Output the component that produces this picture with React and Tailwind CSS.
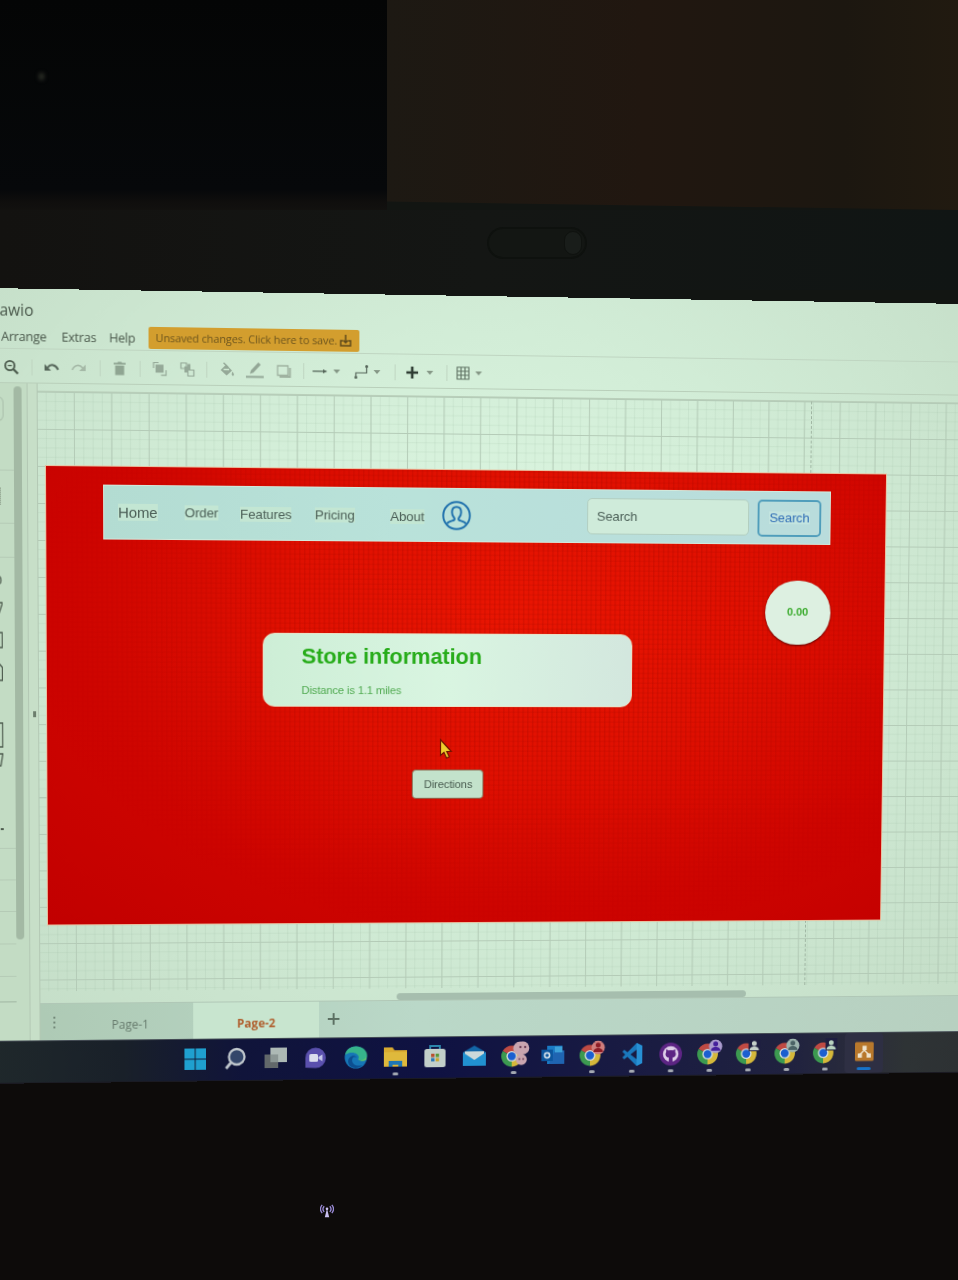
import React from "react";

// Projects a flat rectangle onto a quadrilateral: CSS matrix3d for the tilted display.
function project(src, quad) {
  const [p0, p1, p2, p3] = quad;
  const dx1 = p1[0] - p2[0], dx2 = p3[0] - p2[0], sx = p0[0] - p1[0] + p2[0] - p3[0];
  const dy1 = p1[1] - p2[1], dy2 = p3[1] - p2[1], sy = p0[1] - p1[1] + p2[1] - p3[1];
  const den = dx1 * dy2 - dx2 * dy1;
  const g = (sx * dy2 - dx2 * sy) / den;
  const h = (dx1 * sy - sx * dy1) / den;
  const a = p1[0] - p0[0] + g * p1[0], b = p3[0] - p0[0] + h * p3[0], c = p0[0];
  const d = p1[1] - p0[1] + g * p1[1], e = p3[1] - p0[1] + h * p3[1], f = p0[1];
  const { x, y, w, h: ht } = src;
  const row = (m, n, k) => [m / w, n / ht, k - (m * x) / w - (n * y) / ht];
  const X = row(a, b, c), Y = row(d, e, f), W = row(g, h, 1);
  return `matrix3d(${[X[0], Y[0], 0, W[0], X[1], Y[1], 0, W[1], 0, 0, 1, 0, X[2], Y[2], 0, W[2]].join(",")})`;
}

const tilt = project({ x: 56, y: 176, w: 864, h: 462 }, [
  [56, 176],
  [896, 184.5],
  [890, 629.5],
  [58, 634.5],
]);

const Sep = ({ className }) => <div className={`h-4 w-px shrink-0 bg-[#bfd5c1] ${className}`} />;
const Icon = ({ className, children }) => (
  <svg viewBox="0 0 16 16" className={`h-4 w-4 shrink-0 ${className}`} fill="none" stroke="currentColor" strokeWidth="1.5">
    {children}
  </svg>
);
const Caret = ({ className }) => (
  <svg viewBox="0 0 8 8" className={`h-2 w-2 shrink-0 text-[#859786] ${className}`}>
    <path d="M0.5 2h7L4 6z" fill="currentColor" />
  </svg>
);

function Toolbar() {
  return (
    <div className="flex h-[34px] items-center border-b border-[#b9cfba] pl-[14px] pt-[2px]">
      <Icon className="text-[#4b5a4c]">
        <circle cx="6.5" cy="6.5" r="4.6" strokeWidth="1.8" />
        <path d="M10 10l4.5 4.5" strokeWidth="2.2" />
        <path d="M4.5 6.5h4" strokeWidth="1.2" />
      </Icon>
      <Sep className="ml-3" />
      <Icon className="ml-[11px] text-[#56665a]">
        <path d="M4 8c3-4 8-3.500 10.500 2" strokeWidth="2" />
        <path d="M1 4.500v6.500h6.500z" fill="currentColor" stroke="none" />
      </Icon>
      <Icon className="ml-[11px] text-[#a5b9a7]">
        <path d="M12 8c-3-4-8-3.500-10.500 2" strokeWidth="1.6" />
        <path d="M15 4.500v6.500h-6.500z" fill="currentColor" stroke="none" />
      </Icon>
      <Sep className="ml-[13px]" />
      <Icon className="ml-[11px] text-[#8fa592]">
        <path d="M3.500 5h9v9.500h-9z M2 2.200h3.500l1-1h3l1 1h3.500v1.700h-12z" fill="currentColor" stroke="none" />
      </Icon>
      <Sep className="ml-3" />
      <Icon className="ml-[11px] text-[#95a998]">
        <path d="M4 3.500h8v8h-8z" fill="currentColor" stroke="none" />
        <path d="M2 7V1.500h5M9.500 14.200h5V9" strokeWidth="1.200" />
      </Icon>
      <Icon className="ml-3 text-[#95a998]">
        <path d="M1.500 1.500h5.500v5.500h-5.500zM8.500 8.500h6v6h-6z" strokeWidth="1.200" />
        <path d="M5 5h6v3h-3v3h-3z M8 2.500h3v3h-3z" fill="currentColor" stroke="none" />
      </Icon>
      <Sep className="ml-[11px]" />
      <Icon className="ml-3 text-[#95a998]">
        <path d="M7 2.500l6 6-5.500 5-6-5.500z M13.500 9.500c1.500 2 2 4 .5 4.200s-1.800-2-.5-4.200z" fill="currentColor" stroke="none" />
        <path d="M4.500 0.800l4.500 4.500" />
        <path d="M4.500 7.500h5.500" stroke="#cfe9d2" />
      </Icon>
      <svg viewBox="0 0 18 18" className="ml-[11px] h-[18px] w-[18px] shrink-0 text-[#93a796]">
        <path d="M4 12.500l1-3.500 7.500-8 2.500 2.300-7.500 8z" fill="currentColor" />
        <path d="M0 14.500h18v2h-18z" fill="currentColor" />
      </svg>
      <Icon className="ml-[12px] text-[#9fb2a0]">
        <path d="M4 14h10.500V5" strokeWidth="2" />
        <path d="M2 3h10.500v9.500h-10.500z" strokeWidth="1.300" />
      </Icon>
      <Sep className="ml-3" />
      <Icon className="ml-2 text-[#56665a]">
        <path d="M0.500 8h12" strokeWidth="1.300" />
        <path d="M11 6l4.500 2-4.500 2z" fill="currentColor" stroke="none" />
      </Icon>
      <Caret className="ml-[5px]" />
      <Icon className="ml-[13px] text-[#56665a]">
        <path d="M2.500 13.500V9h11V3" strokeWidth="1.200" />
        <circle cx="2.500" cy="13.500" r="1.500" fill="currentColor" stroke="none" />
        <circle cx="13.500" cy="2.500" r="1.500" fill="currentColor" stroke="none" />
      </Icon>
      <Caret className="ml-1" />
      <Sep className="ml-[14px]" />
      <Icon className="ml-[9px] text-[#2e3c33]">
        <path d="M8 2v12M2 8h12" strokeWidth="2.600" />
      </Icon>
      <Caret className="ml-[6px]" />
      <Sep className="ml-[13px]" />
      <Icon className="ml-[8px] text-[#5d7061]">
        <path d="M2 2h12v12h-12zM6 2v12M10 2v12M2 6h12M2 10h12" strokeWidth="1.100" />
      </Icon>
      <Caret className="ml-1" />
    </div>
  );
}

function Sidebar() {
  return (
    <div className="flex w-[38px] shrink-0 border-r border-[#b3c8b4] bg-[#c3dcc4]">
      <div className="relative w-[24px] shrink-0 overflow-hidden">
        <div className="flex flex-col">
          <div className="mt-[13px] h-[25px] w-[14px] rounded-r-md border border-l-0 border-[#aabfab]" />
          <div className="mt-[48px] h-px bg-[#b5cbb6]" />
          <div className="mt-[17px] h-[17px] w-[11px] border-r border-dotted border-[#82937f]" />
          <div className="mt-[18px] h-px bg-[#b5cbb6]" />
          <div className="mt-[33px] h-px bg-[#b5cbb6]" />
          <svg viewBox="0 0 12 280" className="mt-[8px] h-[280px] w-3" fill="none" stroke="#4d5b4e" strokeWidth="1.300">
            <path d="M6 10c6 0 6 9 0 9M6 37h6l-4 12M4 67h7.500v15h-7.500M6 99h3l2.500 3v13H4M4 158h7.500v24h-7.500M4 189h7.500l-2 12H4" />
            <path d="M9 265h3" strokeWidth="2" />
          </svg>
          <div className="mt-[4px] h-px bg-[#b5cbb6]" />
          <div className="mt-[31px] h-px bg-[#b5cbb6]" />
          <div className="mt-[31px] h-px bg-[#b5cbb6]" />
          <div className="mt-[32px] h-px bg-[#b5cbb6]" />
          <div className="mt-[32px] h-px bg-[#b5cbb6]" />
          <div className="mt-[25px] h-px bg-[#9fb5a1]" />
        </div>
      </div>
      <div className="mt-[3px] h-[556px] w-[8px] rounded-full bg-[#a3b9a4]" />
    </div>
  );
}

function Mockup() {
  return (
    <div className="absolute left-[8px] top-[74px] h-[462px] w-[864px] bg-[radial-gradient(ellipse_at_56%_32%,#e91502_0%,#e01001_35%,#cd0400_68%,#c10000_100%)] font-['Liberation_Sans',Arial,sans-serif] text-[#4c6058] outline outline-1 outline-[#e9c0a0]">
      <div className="absolute inset-0 bg-[repeating-linear-gradient(90deg,rgba(110,0,0,0.13)_0px,rgba(110,0,0,0.13)_1px,transparent_2px,transparent_5px),repeating-linear-gradient(0deg,rgba(110,0,0,0.08)_0px,rgba(110,0,0,0.08)_1px,transparent_2px,transparent_5px)] [mask-image:radial-gradient(ellipse_at_58%_32%,black_30%,transparent_75%)]" />
      <div className="absolute left-[57px] top-[18px] flex h-[55px] w-[749px] items-center border border-[#d3e9dc] bg-[linear-gradient(90deg,#b3dcd2,#b9e2da_40%,#b9dcdc)] pl-[14px] text-[13.500px] leading-none tracking-[-0.100px]">
        <span className="w-[67px] text-[15px]"><span className="bg-[#c3e6d3]">Home</span></span>
        <span className="mt-px w-[56px]"><span className="bg-[#c3e6d3]">Order</span></span>
        <span className="mt-[2px] w-[76px]"><span className="bg-[#c3e6d3]">Features</span></span>
        <span className="mt-[3px] w-[77px]"><span className="bg-[#c3e6d3]">Pricing</span></span>
        <span className="mt-[4px] w-[53px]"><span className="bg-[#c3e6d3]">About</span></span>
        <svg viewBox="0 0 30 30" className="mt-px h-[30px] w-[30px] shrink-0" fill="none" stroke="#2172ad" strokeWidth="2">
          <circle cx="15" cy="15" r="13.700" />
          <path d="M5.200 23.500c1-2.500 4.500-2.800 7-3.700 1.200-.6.800-2 .1-2.800-1.300-1.400-2-3.500-2-5.300 0-3.300 1.900-5.400 4.700-5.400s4.700 2.100 4.700 5.400c0 1.800-.7 3.900-2 5.300-.7.800-1.100 2.200.1 2.800 2.500.9 6 1.200 7 3.700" />
        </svg>
        <div className="ml-[120px] flex h-[37px] w-[169px] items-center rounded-[5px] border border-[#b2cec0] bg-[#cfebda] pl-[9px] text-[13.500px]">Search</div>
        <div className="ml-[9px] flex h-[38px] w-[67px] items-center justify-center rounded-[5px] border-[2px] border-[#4f9dbb] text-[13.500px] text-[#2f6db6]">
          <span className="bg-[#c3e4df]">Search</span>
        </div>
      </div>
      <div className="absolute left-[737.500px] top-[109.500px] flex h-[66.500px] w-[69.500px] items-center justify-center rounded-full bg-[#ddf0e1] text-[11.500px] font-bold text-[#3bab2e] shadow-[0_1px_2px_rgba(60,0,0,0.8)]">
        0.00
      </div>
      <div className="absolute left-[217.500px] top-[165.500px] h-[75px] w-[381px] rounded-[12px] border border-[#eadfc4] bg-[linear-gradient(90deg,#cdeed6,#d9f5e1_50%,#d3e7de)] pl-[39px] pt-[9px]">
        <div className="text-[22.500px] font-bold leading-[28px] tracking-[-0.130px] text-[#27ac1a]">Store information</div>
        <div className="mt-[13px] text-[11.500px] leading-[14px] tracking-[-0.150px] text-[#52ab52]">Distance is 1.1 miles</div>
      </div>
      <svg viewBox="0 0 14 22" className="absolute left-[398.500px] top-[273px] h-[22px] w-[14px]">
        <path d="M1.500 1.500v16l3.500-3 2.700 5.800 2.800-1.300-2.600-5.500h4.600z" fill="#efcf2c" stroke="#6a1500" strokeWidth="1.200" />
      </svg>
      <div className="absolute left-[371px] top-[304.500px] flex h-[30px] w-[74px] items-center justify-center rounded-[4px] border border-[#8b6a50] bg-[#c3e2cb] pl-px pt-[2px] text-[11.500px] tracking-[-0.100px] text-[#495c50]">
        Directions
      </div>
    </div>
  );
}

function Canvas() {
  return (
    <div className="relative h-[606px] overflow-hidden border-t border-[#b9cfba] bg-[linear-gradient(90deg,#b4cbb7_1px,transparent_1px),linear-gradient(180deg,#b4cbb7_1px,transparent_1px),linear-gradient(90deg,rgba(140,170,145,0.15)_1px,transparent_1px),linear-gradient(180deg,rgba(140,170,145,0.15)_1px,transparent_1px)] bg-[length:37.450px_37px,37.450px_37px,9.362px_9.250px,9.362px_9.250px] bg-[position:36px_0px,0px_0px,36px_0px,0px_0px]">
      <div className="absolute left-[792px] top-0 h-full border-l border-dashed border-[#9db3a0]" />
      <Mockup />
    </div>
  );
}

function PageTabs() {
  return (
    <div className="flex h-[38px] items-center border-t border-[#b0c7b6] bg-[linear-gradient(90deg,#aecab5,#bad8c8_40%,#b7d0c0)] font-['Open_Sans','Noto_Sans',sans-serif] text-[11.500px] text-[#667a6c]">
      <div className="flex w-[28px] flex-col items-center gap-[2.500px] pt-px">
        <i className="h-[2.500px] w-[2.500px] rounded-full bg-[#5f7264]" />
        <i className="h-[2.500px] w-[2.500px] rounded-full bg-[#5f7264]" />
        <i className="h-[2.500px] w-[2.500px] rounded-full bg-[#5f7264]" />
      </div>
      <div className="flex w-[127px] items-center justify-center pr-px pt-[6px] text-[12px]">Page-1</div>
      <div className="flex h-full w-[129px] items-center justify-center bg-[#c8e5cf] pt-[7px] text-[12px] font-bold text-[#b0602f]">Page-2</div>
      <svg viewBox="0 0 12 12" className="mb-px ml-[9px] h-3 w-3" stroke="#5b6f62" strokeWidth="2">
        <path d="M6 0v12M0 6h12" />
      </svg>
    </div>
  );
}

function Chrome({ badge, fg }) {
  return (
    <svg viewBox="0 0 30 30" className="h-[30px] w-[30px]">
      <g transform="translate(13 15.500)">
        <path d="M0 0L-9.500-5.500A11 11 0 0 1 9.500-5.500z" fill="#bf4a43" />
        <path d="M0 0L9.500-5.500A11 11 0 0 1 0 11z" fill="#d5b83a" />
        <path d="M0 0L0 11A11 11 0 0 1-9.500-5.500z" fill="#3c9a50" />
        <circle r="5.600" fill="#d5dedc" />
        <circle r="4.200" fill="#1b5fd0" />
      </g>
      {badge && <circle cx="21.500" cy="7.500" r="7" fill={badge} />}
      {!badge && <path d="M15.500 0H28v13H15.500z" fill="#1e1e40" />}
      <circle cx="21.500" cy="4.800" r="2.600" fill={fg} />
      <path d="M16.500 12c0-5.500 10-5.500 10 0z" fill={fg} />
    </svg>
  );
}

const G = ({ children }) => <svg viewBox="0 0 24 24" className="h-6 w-6">{children}</svg>;

const apps = [
  [<G><path d="M1 1h10.500v10.500H1zM12.500 1H23v10.500H12.500zM1 12.500h10.500V23H1zM12.500 12.500H23V23H12.500z" fill="#1fa0cf" /></G>],
  [<G><circle cx="13.500" cy="10" r="8" fill="#34466a" stroke="#bfc6cc" strokeWidth="2.300" /><path d="M7.500 16L2.500 22" stroke="#bfc6cc" strokeWidth="2.800" /></G>],
  [<G><path d="M1 8h14v14H1z" fill="#62686a" /><path d="M7 1h17v15H7z" fill="#adb9b5" /><path d="M7 8h8v8H7z" fill="#8b9694" /></G>],
  [<G><path d="M2 22V12A10.500 10.500 0 1 1 12.500 22.500z" fill="#5a50ad" /><rect x="6" y="8" width="9" height="8" rx="1.500" fill="#dcdfee" /><path d="M15.500 11l4-2.500v7l-4-2.500z" fill="#c5c8ea" /></G>],
  [<G><circle cx="12" cy="12" r="11.500" fill="#1676b6" /><path d="M1 9C3-3 24-2 23.500 11c-.5 5-8 5.500-9 2.500C17 9 9 4 1 9z" fill="#36b38b" /><path d="M15 13.500c1 3 6.500 3 8 .500V6c2 10-8 10-8.500 8z" fill="#68c466" /><path d="M9 12c-3 5 2 10.500 10 8-4 4-14 5-15-4 0-5 6-8 9-4-2-1-3-.5-4 0z" fill="#0c4f91" /></G>, 1],
  [<G><path d="M0 2h9l2 3h13v17H0z" fill="#d9ab30" /><path d="M0 7h24v14H0z" fill="#dfb93c" /><path d="M5 22v-6h14v6h-4v-2H9v2z" fill="#1f76b5" /></G>, 2],
  [<G><path d="M7 5V1h10v4" fill="none" stroke="#2c88ad" strokeWidth="2" /><rect x="1" y="4" width="22" height="19" rx="2.500" fill="#c2cfc9" /><path d="M8 9h3.500v3.500H8z" fill="#b9502f" /><path d="M12.700 9h3.500v3.500h-3.500z" fill="#5b9839" /><path d="M8 13.500h3.500V17H8z" fill="#2c79b5" /><path d="M12.700 13.500h3.500V17h-3.500z" fill="#caa62e" /></G>],
  [<G><path d="M0 8L12 1l12 7v14H0z" fill="#1366a7" /><path d="M2 7h20v5l-10 5-10-5z" fill="#ccd9da" /><path d="M0 8l12 8 12-8v14H0z" fill="#2191d0" /></G>],
  [<div className="relative"><Chrome badge="#c9a5af" fg="#c9a5af" /><svg viewBox="0 0 16 26" className="absolute right-[-2px] top-0 h-[26px] w-4"><circle cx="8.500" cy="7" r="6.800" fill="#c9a5af" /><circle cx="7" cy="19" r="5.800" fill="#c9a5af" /><g fill="#6c3f57"><circle cx="6" cy="6" r="1.200" /><circle cx="11" cy="6" r="1.200" /><circle cx="5" cy="18.500" r="1" /><circle cx="9" cy="18.500" r="1" /></g></svg></div>, 2],
  [<G><path d="M6 2h16v19H6z" fill="#1a7ac4" /><path d="M14 7h10v14H8z" fill="#1f64b1" /><path d="M14 3h8v6h-8z" fill="#3da0d8" /><rect y="6" width="12" height="12" fill="#0c569e" /><circle cx="6" cy="12" r="2.600" fill="none" stroke="#d2e0ea" strokeWidth="1.700" /></G>],
  [<Chrome badge="#cf7d7c" fg="#8d1d26" />, 2],
  [<G><path d="M17 0l6 3v18l-6 3L2 9l2-2 13 10V7L4 17l-2-2z" fill="#1a78bd" /><path d="M17 0l6 3v18l-6 3z" fill="#2790d4" /></G>, 2],
  [<G><circle cx="12" cy="12" r="12" fill="#5d2584" /><circle cx="12" cy="12" r="8.200" fill="#ddcde8" /><path d="M7.500 7l2.200 1.300c1.500-.4 3.100-.4 4.600 0L16.500 7c.5 1.200.4 2.200.2 2.900 1.600 2.200.5 5.300-2.700 5.700v6h-4v-6c-3.200-.4-4.300-3.500-2.700-5.700-.2-.7-.3-1.700.2-2.900z" fill="#5d2584" /></G>, 2],
  [<Chrome badge="#aa9bce" fg="#45209c" />, 2],
  [<Chrome fg="#c4cfc9" />, 2],
  [<Chrome badge="#9db5af" fg="#4b6366" />, 2],
  [<Chrome fg="#b8d2bf" />, 2],
  [<G><rect x="2" y="1.500" width="20" height="20" rx="1.500" fill="#b8782c" /><path d="M12 8v3M12 10l-5 5M12 10l5 5" stroke="#eee3cd" strokeWidth="1.500" /><path d="M10 5.500h4.500v4.500H10zM5 13.500h4.500v4.500H5zM14.500 13.500H19v4.500h-4.500z" fill="#eee3cd" /></G>, 3],
];

function Taskbar() {
  return (
    <div className="flex h-[44px] border-b border-t border-b-[#1a1a22] border-t-[#454c55] bg-[linear-gradient(90deg,#1f282b_0%,#192029_13%,#10143a_25%,#0f1242_45%,#191b42_65%,#20223f_82%,#2b2d3a_90%,#2e3335_94%,#2d3133_100%)] pl-[184.300px]">
      {apps.map(([icon, state], i) => (
        <div key={i} className={`relative flex h-full w-[41.160px] shrink-0 items-center justify-center pb-[2px] ${state === 3 ? "rounded bg-[#2e2f43]" : ""}`}>
          {icon}
          {state === 2 && <div className="absolute bottom-[3px] h-[3px] w-[6px] rounded-full bg-[#a4a9b2]" />}
          {state === 3 && <div className="absolute bottom-[3px] h-[3px] w-[15px] rounded-full bg-[#1773c9]" />}
        </div>
      ))}
    </div>
  );
}

function Display() {
  return (
    <div
      className="ml-[-10px] flex h-[800px] w-[1010px] shrink-0 origin-top-left flex-col overflow-hidden bg-[#20232f]"
      style={{ transform: tilt }}
    >
      <div className="flex h-[756px] flex-col bg-[radial-gradient(ellipse_at_50%_42%,#def8e3_0%,#d2edd7_45%,#c3dcc6_100%)]">
        <header className="flex h-[60px] flex-col border-b border-[#bfd5c1] font-['Open_Sans','Noto_Sans',sans-serif] text-[#4a584b]">
          <div className="h-[35px] pl-[10.500px] pt-[9px] text-[15.500px] leading-[24px]">awio</div>
          <div className="flex h-[24px] items-center text-[12.500px] tracking-[-0.2px]">
            <span className="w-[61.500px] pl-[12px] pt-[2px]">Arrange</span>
            <span className="w-[48px] pl-[10.500px] pt-[2px]">Extras</span>
            <span className="w-[49.500px] pl-[10px] pt-[2px]">Help</span>
            <div className="flex h-[22px] w-[213px] shrink-0 items-center rounded-[2px] bg-[#d39e2e] pl-[7px] text-[11px] tracking-[-0.120px] text-[#6d551e]">
              <span className="w-[186px] whitespace-nowrap">Unsaved changes. Click here to save.</span>
              <svg viewBox="0 0 12 12" className="h-3 w-3" fill="none" stroke="#5f4a1b" strokeWidth="1.500">
                <path d="M3 6H1v5h10V6H9M6 0v7.500M3.500 5.500L6 8l2.500-2.500" />
              </svg>
            </div>
          </div>
        </header>
        <Toolbar />
        <div className="flex min-h-0 flex-1">
          <Sidebar />
          <div className="flex w-[10px] shrink-0 items-center border-r border-[#b3c8b4] bg-[#c7dfc8]">
            <div className="mb-[1px] ml-[4px] h-[6px] w-[3px] bg-[#6c7e6d]" />
          </div>
          <div className="flex flex-1 flex-col pt-[7px]">
            <Canvas />
            <div className="flex flex-1 items-center">
              <div className="ml-[364px] mt-[5px] h-[7px] w-[366px] rounded-full bg-[#a6beae]" />
            </div>
            <PageTabs />
          </div>
        </div>
      </div>
      <Taskbar />
    </div>
  );
}

export default function App() {
  return (
    <div className="flex h-[1280px] w-[958px] flex-col overflow-hidden bg-[linear-gradient(180deg,#121512_0%,#121512_50%,#0d0b0a_50%,#0d0b0a_100%)]">
      <div className="flex h-[210px] shrink-0">
        <div className="w-[387px] bg-[linear-gradient(180deg,#040505,#06080a_90%,#0f0e0d_96%,#12110f_100%)]">
          <div className="ml-[39px] mt-[73px] h-[7px] w-[5px] rounded-full bg-[#32352c] blur-[2px]" />
        </div>
        <div className="flex-1 bg-[linear-gradient(90deg,#1d1913,#211710_45%,#1c1710_80%,#211a10)] [clip-path:polygon(0_0,100%_0,100%_100%,0_96%)]" />
      </div>
      <div className="flex h-[80px] shrink-0 justify-center bg-[linear-gradient(90deg,#131210,#141614_50%,#101514)] pl-[115px]">
        <div className="mt-[17px] flex h-[32px] w-[100px] items-center justify-end rounded-full border-2 border-[#0e110e] bg-[#131613] pr-[3px]">
          <div className="h-[24px] w-[18px] rounded-full border border-[#0f120f] bg-[#191d1a]" />
        </div>
      </div>
      <Display />
      <div className="relative flex-1">
        <svg viewBox="0 0 16 16" className="absolute left-[320px] top-[114px] h-[14px] w-[14px]" fill="none" stroke="#9b8cd8" strokeWidth="1.500">
          <path d="M8 5l-2.500 10h5z" fill="#c9c0f0" stroke="none" />
          <circle cx="8" cy="5.500" r="1.500" fill="#c9c0f0" stroke="none" />
          <path d="M4.800 2.500c-1.800 2-1.800 4.500 0 6.500M11.200 2.500c1.800 2 1.800 4.500 0 6.500M2.500 1c-2.500 3-2.500 6.500 0 9.500M13.500 1c2.500 3 2.500 6.500 0 9.500" />
        </svg>
      </div>
    </div>
  );
}
